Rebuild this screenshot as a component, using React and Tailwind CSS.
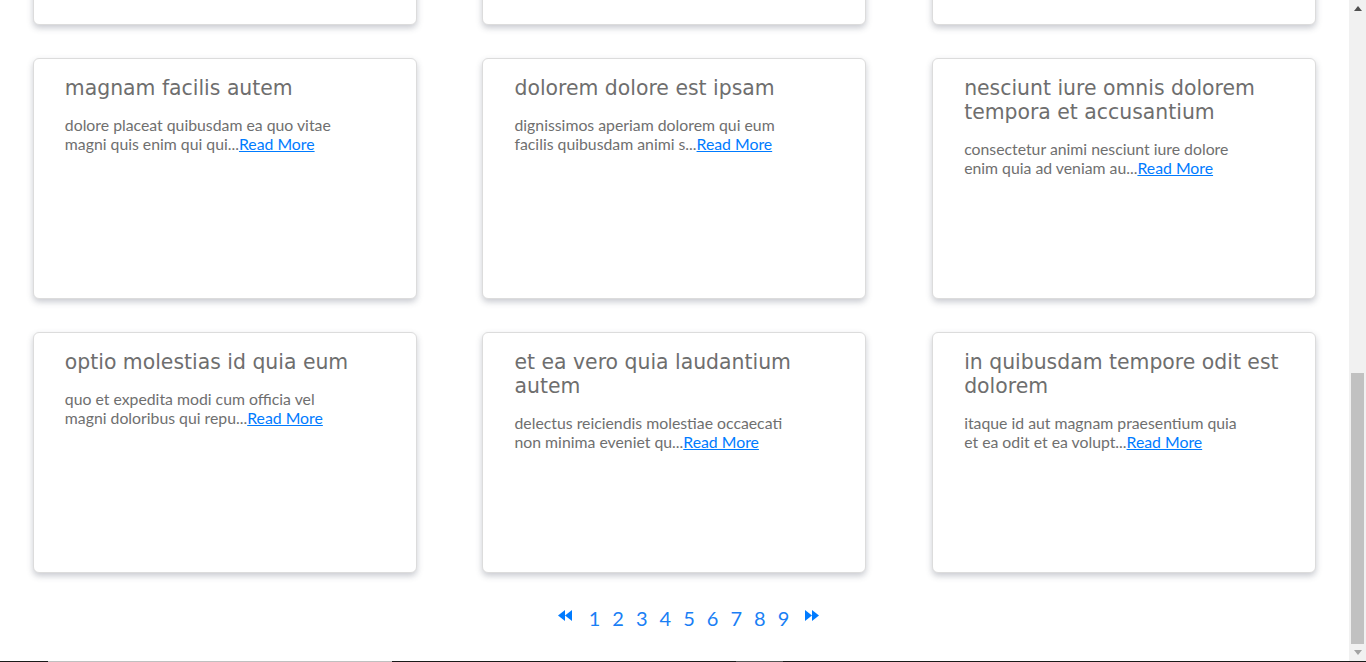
import React from 'react';

// Articles de la page courante (trois par rangée) ; la première rangée est presque hors champ
const posts = [
  { id: 4, title: 'eum et est occaecati', body: ['ullam et saepe reiciendis voluptatem adipisci', 'sit amet autem assumend'] },
  { id: 5, title: 'nesciunt quas odio', body: ['repudiandae veniam quaerat sunt sed', 'alias aut fugiat sit autem sed est'] },
  { id: 6, title: 'dolorem eum magni eos aperiam quia', body: ['ut aspernatur corporis harum nihil', 'mollitia nobis aliquid'] },
  { id: 7, title: 'magnam facilis autem', body: ['dolore placeat quibusdam ea quo vitae', 'magni quis enim qui qui'] },
  { id: 8, title: 'dolorem dolore est ipsam', body: ['dignissimos aperiam dolorem qui eum', 'facilis quibusdam animi s'] },
  { id: 9, title: 'nesciunt iure omnis dolorem tempora et accusantium', body: ['consectetur animi nesciunt iure dolore', 'enim quia ad veniam au'] },
  { id: 10, title: 'optio molestias id quia eum', body: ['quo et expedita modi cum officia vel', 'magni doloribus qui repu'] },
  { id: 11, title: 'et ea vero quia laudantium autem', body: ['delectus reiciendis molestiae occaecati', 'non minima eveniet qu'] },
  { id: 12, title: 'in quibusdam tempore odit est dolorem', body: ['itaque id aut magnam praesentium quia', 'et ea odit et ea volupt'] },
];

const pages = [1, 2, 3, 4, 5, 6, 7, 8, 9];

// Icône "fast backward / forward"
const DoubleArrow = ({ dir }) => (
  <svg width="14" height="11" viewBox="0 0 14 11" className={dir === 'right' ? 'rotate-180' : ''}>
    <polygon points="7,0 0,5.5 7,11" fill="#007bff" />
    <polygon points="14,0 7,5.5 14,11" fill="#007bff" />
  </svg>
);

// Carte d'un article
const PostCard = ({ post }) => (
  <div className="w-[384px] h-[241px] shrink-0 bg-white border border-[#dcdcdc] rounded-[6px] shadow-[0_3px_6px_rgba(60,70,90,0.28)] pl-[31px] pr-[24px] pt-[17px]">
    <h3 className="text-[20.4px] leading-[24px] text-[#6e6e6e] font-normal mb-[15px]" style={{ fontFamily: '"DejaVu Sans", sans-serif' }}>
      {post.title}
    </h3>
    <p className="text-[15.8px] leading-[19px] text-[#6f6f6f]">
      {post.body[0]}
      <br />
      {post.body[1]}...
      <a href="#" className="text-[#007bff] underline">Read More</a>
    </p>
  </div>
);

const App = () => {
  return (
    <div className="h-[662px] w-full flex flex-col overflow-hidden bg-white" style={{ fontFamily: 'Lato, "Liberation Sans", sans-serif' }}>
      <div className="flex h-[661px]">
        {/* Zone de contenu, défilée tout en bas */}
        <main className="flex-1 h-full flex flex-col justify-end overflow-hidden">
          <div className="shrink-0">
            <div className="flex flex-wrap justify-around gap-y-[33px]">
              {posts.map(post => (
                <PostCard key={post.id} post={post} />
              ))}
            </div>

            {/* Pagination */}
            <div className="mt-[30px] h-[30px] flex justify-center items-center pl-[28px]">
              <span className="mr-[17px] -mt-[5px] flex"><DoubleArrow dir="left" /></span>
              <div className="flex gap-[12px] text-[20px] text-[#1a7ff5]">
                {pages.map(p => (
                  <a key={p} href="#">{p}</a>
                ))}
              </div>
              <span className="ml-[16px] -mt-[5px] flex"><DoubleArrow dir="right" /></span>
            </div>
            <div className="h-[28px]" />
          </div>
        </main>

        {/* Barre de défilement */}
        <aside className="w-[17px] h-full bg-[#f1f1f1] flex flex-col">
          <div className="h-[17px] flex items-center justify-center">
            <svg width="8" height="5" viewBox="0 0 8 5"><polygon points="0,5 4,0 8,5" fill="#505050" /></svg>
          </div>
          <div className="flex-1 flex flex-col justify-end">
            <div className="h-[271px] mx-[2px] bg-[#c1c1c1]" />
          </div>
          <div className="h-[17px] flex items-center justify-center">
            <svg width="8" height="5" viewBox="0 0 8 5"><polygon points="0,0 8,0 4,5" fill="#a3a3a3" /></svg>
          </div>
        </aside>
      </div>

      {/* Bord inférieur */}
      <div className="h-px flex">
        <div className="w-[48px] bg-[#1a1a1a]" />
        <div className="w-[344px] bg-[#c0c0c0]" />
        <div className="w-[344px] bg-[#1a1a1a]" />
        <div className="w-[47px] bg-[#555555]" />
        <div className="flex-1 bg-[#1a1a1a]" />
      </div>
    </div>
  );
};

export default App;
